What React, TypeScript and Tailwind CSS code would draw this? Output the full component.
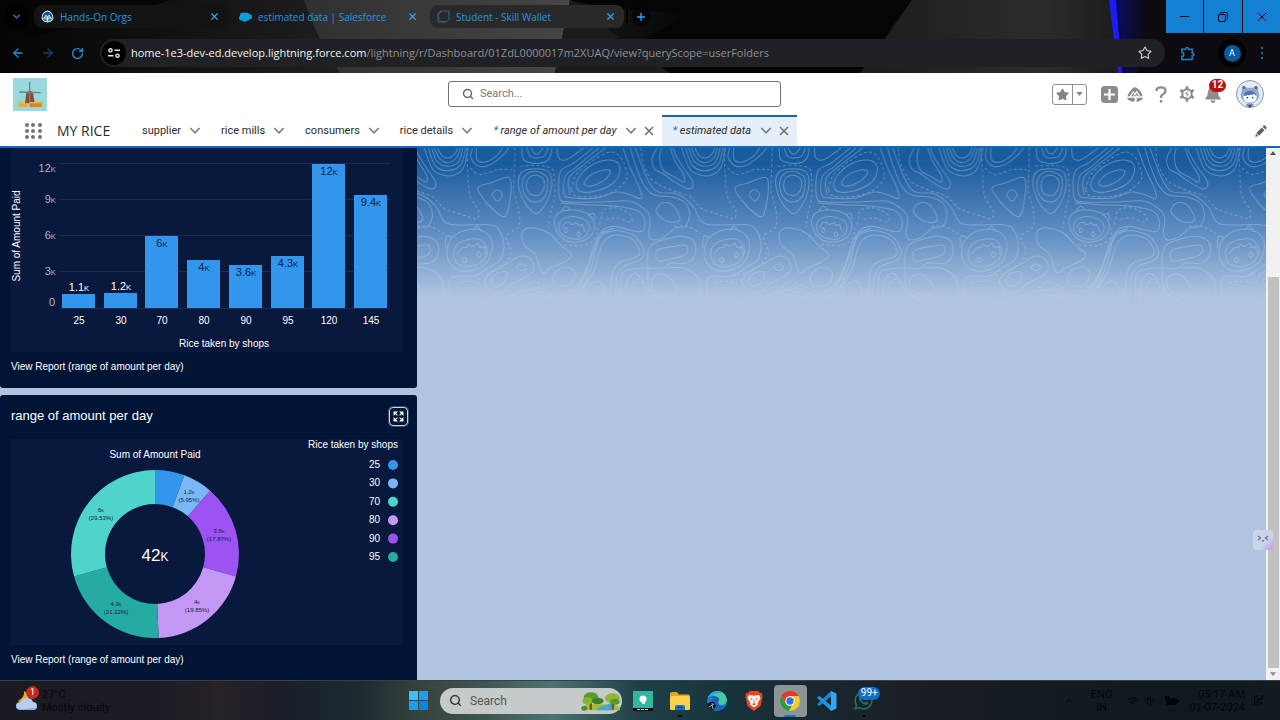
import React from "react";
import { ArrowLeft, ArrowRight, RotateCw, X, Plus, ChevronDown, ChevronUp, Star, Search, Wifi, Volume1 } from "lucide-react";
import { FaWhatsapp, FaStar } from "react-icons/fa";

const UI = "font-[Roboto,'Open_Sans',sans-serif]";
const ARIAL = "font-['Liberation_Sans',Arial,sans-serif]";

/* ---------- Browser ---------- */

function TrailheadIcon() {
  return (
    <svg viewBox="0 0 26 26" className="size-[13px] shrink-0">
      <path d="M13 1Q24 3 25 16q-2 8-12 9Q3 24 1 16 2 3 13 1z" fill="#dff0fa" />
      <path d="M3 16Q3 5 13 3 Q23 5 23 16 Z" fill="#12508f" />
      <path d="M5 16l5-7 3 4 3-4 5 7z" fill="#d9e7f5" />
      <path d="M8 15l2-3 2 3zM14 15l2-3 2 3z" fill="#12508f" />
      <path d="M3 17h20q-3 6-10 6T3 17z" fill="#2f8f6a" />
      <path d="M11 17h4l-2 7z" fill="#fff" />
    </svg>
  );
}

function CloudIcon() {
  return (
    <svg viewBox="0 0 26 20" className="h-[10px] w-[13px] shrink-0" fill="#0d9dda">
      <circle cx="8" cy="7" r="6" />
      <circle cx="15" cy="6.500" r="5.500" />
      <circle cx="20.500" cy="9.500" r="5.500" />
      <circle cx="5" cy="12" r="5" />
      <circle cx="11" cy="14" r="5.500" />
      <circle cx="16" cy="12.500" r="5" />
    </svg>
  );
}

function WalletIcon() {
  return (
    <svg viewBox="0 0 26 26" className="size-[13px] shrink-0" fill="none" strokeWidth="2">
      <path d="M7 2h17v17l-5 5H2V8z" stroke="#2d6b94" />
      <path d="M7 2v3H4v14l4 4h10" stroke="#5d4f8f" strokeDasharray="5 2" />
    </svg>
  );
}

function BrowserTab({ icon, title, tone }: { icon: React.ReactNode; title: string; tone: string }) {
  return (
    <div className={`mr-1 flex h-[23px] w-[194px] items-center gap-[6px] rounded-lg pr-2 pl-[7px] ${tone}`}>
      {icon}
      <span className="flex-1 truncate font-['Open_Sans',sans-serif] text-[10px] leading-4 text-[#2795e0]">{title}</span>
      <button aria-label={`Close ${title}`} className="text-[#2ea3f2]">
        <X className="size-[11px]" strokeWidth={2.6} />
      </button>
    </div>
  );
}

function BrowserChrome() {
  return (
    <header className={`relative h-[73px] shrink-0 overflow-hidden bg-[#050506] ${UI}`}>
      <svg viewBox="0 0 1280 73" preserveAspectRatio="none" className="absolute inset-0 size-full" aria-hidden="true">
        <defs>
          <linearGradient id="gray" x1="0" x2="1">
            <stop offset="0" stopColor="#303030" />
            <stop offset="1" stopColor="#464646" />
          </linearGradient>
          <linearGradient id="slate" x1="0" x2="1">
            <stop offset="0" stopColor="#1c1c1c" />
            <stop offset=".7" stopColor="#2c2c2c" />
            <stop offset="1" stopColor="#1b1b1b" />
          </linearGradient>
          <linearGradient id="glow" x1="0" x2="1">
            <stop offset="0" stopColor="#0b0c9c" />
            <stop offset="1" stopColor="#0d0b0f" />
          </linearGradient>
          <linearGradient id="fade" x1="0" x2="1">
            <stop offset="0" stopColor="#040404" />
            <stop offset="1" stopColor="#1f1f20" />
          </linearGradient>
          <linearGradient id="dusk" x1="0" x2="1">
            <stop offset="0" stopColor="#1d1d1e" />
            <stop offset="1" stopColor="#050506" />
          </linearGradient>
        </defs>
        <path d="M0 40Q90 30 170 0H340V73H0z" fill="url(#fade)" />
        <path d="M304 0H570L555 73H340Q318 42 304 0z" fill="url(#gray)" />
        <path d="M570 0Q590 8 690 14L640 40 670 73H555z" fill="url(#dusk)" />
        <path d="M566 28H606L650 60 670 73H555z" fill="#1c1c1d" />
        <path d="M912 0H1112L1122 73H860z" fill="url(#slate)" />
        <path d="M1118 0H1280V73H1124z" fill="#0d0b0f" />
        <path d="M1114 0h34l-10 73h-16z" fill="url(#glow)" opacity=".6" />
        <path d="M1109 0h7l6 73h-4z" fill="#1c1cf5" />
      </svg>

      <div className="relative flex h-[33px] items-center">
        <button aria-label="Search tabs" className="mr-[6px] ml-[5px] flex size-[23px] items-center justify-center rounded-lg bg-black text-[#2795e0]">
          <ChevronDown className="size-[11px]" strokeWidth={2.6} />
        </button>
        <BrowserTab icon={<TrailheadIcon />} title="Hands-On Orgs" tone="bg-[#131314]" />
        <BrowserTab icon={<CloudIcon />} title="estimated data | Salesforce" tone="bg-transparent" />
        <BrowserTab icon={<WalletIcon />} title="Student - Skill Wallet" tone="bg-[#29292a]" />
        <span className="-ml-[2px] h-[13px] w-[2px] bg-black" />
        <button aria-label="New tab" className="ml-[3px] flex size-5 items-center justify-center rounded-full bg-black/50 text-[#2ea3f2]">
          <Plus className="size-3" strokeWidth={2.8} />
        </button>
        <div className="ml-auto flex h-[33px] gap-px text-black">
          <button aria-label="Minimize" className="flex w-[37px] items-center justify-center bg-[#1380d4]">
            <span className="h-px w-[9px] bg-black" />
          </button>
          <button aria-label="Restore" className="flex w-[38px] items-center justify-center bg-[#1380d4]">
            <svg viewBox="0 0 10 10" className="size-[10px]" fill="none" stroke="currentColor">
              <rect x=".5" y="2.500" width="7" height="7" rx="1.500" />
              <path d="M2.500 2.500V1.500q0-1 1-1H8q1.500 0 1.500 1.500V6.500q0 1-1 1" />
            </svg>
          </button>
          <button aria-label="Close window" className="flex w-[37px] items-center justify-center bg-[#1380d4]">
            <svg viewBox="0 0 10 10" className="size-[10px]" stroke="currentColor">
              <path d="M1 1l8 8M9 1L1 9" />
            </svg>
          </button>
        </div>
      </div>

      <div className="relative mt-[6px] flex h-7 items-center">
        <div className="flex w-[100px] items-center gap-[16px] pl-[11px] text-[#2392df]">
          <button aria-label="Back"><ArrowLeft className="size-[14px]" strokeWidth={2.2} /></button>
          <button aria-label="Forward" className="text-[#12486e]"><ArrowRight className="size-[14px]" strokeWidth={2.2} /></button>
          <button aria-label="Reload"><RotateCw className="size-[13px]" strokeWidth={2.4} /></button>
        </div>
        <div className="flex h-7 flex-1 items-center rounded-full bg-[#202124] pr-[13px] pl-[2px]">
          <span className="flex size-6 shrink-0 items-center justify-center rounded-full bg-black">
            <svg viewBox="0 0 12 10" className="h-[10px] w-3" fill="none" stroke="#e8eaed" strokeWidth="1.400">
              <circle cx="2.500" cy="2.300" r="1.600" />
              <path d="M6.500 2.300H12M0 7.700h5.500" />
              <circle cx="9.500" cy="7.700" r="1.600" />
            </svg>
          </span>
          <p className="min-w-0 flex-1 truncate pl-[5px] font-['Open_Sans',sans-serif] text-[11px] leading-4 text-[#8d9095]">
            <span className="text-[#f1f3f4]">home-1e3-dev-ed.develop.lightning.force.com</span>/lightning/r/Dashboard/01ZdL0000017m2XUAQ/view?queryScope=userFolders
          </p>
          <button aria-label="Bookmark this tab" className="text-[#c7cacd]"><Star className="size-[14px]" strokeWidth={2} /></button>
        </div>
        <div className="flex w-[115px] items-center pr-[17px] pl-[15px]">
          <button aria-label="Extensions">
            <svg viewBox="0 0 16 16" className="size-[15px]" fill="none" stroke="#1f83c8" strokeWidth="1.600">
              <path d="M2 3.500h4q0-2 1.500-2t1.500 2h4v4q2 0 2 1.500t-2 1.500v4H2v-3.500q2 0 2-2t-2-2z" />
            </svg>
          </button>
          <button aria-label="Profile" className="mr-[15px] ml-auto flex size-7 items-center justify-center rounded-full bg-black">
            <span className="flex size-[17px] items-center justify-center rounded-full bg-[#065a9e] text-[9px] leading-3 text-white">A</span>
          </button>
          <button aria-label="Menu" className="flex flex-col gap-[3px]">
            <i className="size-[2px] rounded-full bg-[#2392df]" />
            <i className="size-[2px] rounded-full bg-[#2392df]" />
            <i className="size-[2px] rounded-full bg-[#2392df]" />
          </button>
        </div>
      </div>
    </header>
  );
}

/* ---------- Application header ---------- */

function MillLogo() {
  return (
    <svg viewBox="0 0 102 99" className="h-[33px] w-[34px]" role="img" aria-label="MY RICE logo">
      <rect width="102" height="99" fill="#9bd8dd" />
      <rect x="12" y="68" width="78" height="18" fill="#b9cf7c" />
      <path d="M40 44h20l5 32H36z" fill="#874b35" />
      <path d="M48 45h3v30h-3z" fill="#b97955" />
      <path d="M41 44q9-12 18 0z" fill="#5d4a48" />
      <path d="M48 12h4v58h-4z" fill="#8c7f70" />
      <path d="M18 40l65 2v4l-65-2z" fill="#64828a" />
      <rect x="17" y="76" width="25" height="11" fill="#f2a93c" />
      <rect x="50" y="72" width="36" height="15" fill="#d4862c" />
      <path d="M50 72h36v4H50z" fill="#f0b050" />
    </svg>
  );
}

function AstroAvatar() {
  return (
    <svg viewBox="0 0 84 84" className="size-7" role="img" aria-label="User avatar">
      <circle cx="42" cy="42" r="40.500" fill="#e3eaf5" stroke="#8d97a5" strokeWidth="3" />
      <path d="M18 32q-2-14 4-15 6 0 10 6h20q4-6 10-6 6 1 4 15 5 8 3 18-4 18-27 18T15 50q-2-10 3-18z" fill="#90a8ce" />
      <circle cx="24" cy="23" r="4" fill="#4a6898" />
      <circle cx="60" cy="23" r="4" fill="#4a6898" />
      <path d="M22 50q0-18 20-18t20 18q0 17-20 17T22 50z" fill="#fff" />
      <path d="M22 47q3-15 20-15t20 15q-6-2-8-6-4 5-10 3-6 4-9 0-3 5-13 3z" fill="#5574a6" />
      <circle cx="34" cy="53" r="2.500" fill="#33507f" />
      <circle cx="50" cy="53" r="2.500" fill="#33507f" />
      <path d="M30 72q12-4 24 0l-4 8q-8 4-16 0z" fill="#7c93b8" />
      <circle cx="42" cy="78" r="4" fill="#2d4470" />
    </svg>
  );
}

function HeaderActions() {
  return (
    <div className="flex items-center justify-end pr-4">
      <div className="mr-[9px] flex h-[21px] w-[35px] rounded-[3px] border border-[#8f8f8f] text-[#858585]">
        <button aria-label="Add favorite" className="flex flex-1 items-center justify-center border-r border-[#8f8f8f]">
          <FaStar className="size-[13px]" />
        </button>
        <button aria-label="Favorites list" className="flex w-[13px] items-center justify-center">
          <svg viewBox="0 0 8 5" className="h-1 w-[7px]" fill="currentColor"><path d="M0 0h8L4 5z" /></svg>
        </button>
      </div>
      <button aria-label="Global actions" className="flex w-[26px] justify-center">
        <svg viewBox="0 0 17 17" className="size-[17px]">
          <rect width="17" height="17" rx="3.500" fill="#8c8c8c" />
          <path d="M8.500 3v11M3 8.500h11" stroke="#fff" strokeWidth="2.200" />
        </svg>
      </button>
      <button aria-label="Guidance center" className="flex w-[26px] justify-center">
        <svg viewBox="0 0 48 45" className="h-[15px] w-4" fill="#8c8c8c">
          <path d="M1 28Q5 14 18 3q6-4 12 0 14 10 17 25z" />
          <path d="M10 28l9-13 5 7 5-8 9 14" fill="none" stroke="#fff" strokeWidth="3.500" />
          <path d="M19 28l4-6M29 28l-2-4" stroke="#fff" strokeWidth="2.500" />
          <path d="M0 32h18q8 0 6 5l-3 7Q3 43 0 32zM27 44q4-4 2-8-1-4 5-4h14q-4 11-21 12z" />
        </svg>
      </button>
      <button aria-label="Help" className="flex w-[26px] justify-center">
        <svg viewBox="0 0 12 17" className="h-[17px] w-3" fill="none" stroke="#8c8c8c" strokeWidth="2.400">
          <path d="M1.500 5Q1.500 1.400 6 1.400T10.500 5Q10.500 7 8 8.300 6 9.300 6 11.500V12" />
          <path d="M6 14v2.600" />
        </svg>
      </button>
      <button aria-label="Setup" className="flex w-[26px] justify-center">
        <svg viewBox="0 0 48 48" className="size-4" fill="none" stroke="#8c8c8c">
          <circle cx="24" cy="24" r="14" strokeWidth="6" />
          <path d="M24 1v8M24 39v8M4 12.500l7 4M37 31.500l7 4M4 35.500l7-4M37 16.500l7-4" strokeWidth="8" />
          <path d="M26 16l-6 8h8l-5 8" strokeWidth="3" />
        </svg>
      </button>
      <button aria-label="12 notifications" className="relative flex w-[26px] justify-center">
        <svg viewBox="0 0 16 17" className="h-[17px] w-4" fill="#8c8c8c">
          <path d="M8 1q4.500 0 5 5 .2 4 2.500 6v1.500H.5V12Q2.800 10 3 6q.5-5 5-5zM5.500 14.500h5Q10 17 8 17t-2.500-2.500z" />
        </svg>
        <span className="absolute -top-[7px] left-[9px] flex h-[13px] w-[17px] items-center justify-center rounded-full bg-[#c20a0a] text-[10px] leading-3 font-bold text-white">12</span>
      </button>
      <button aria-label="View profile" className="ml-[10px]"><AstroAvatar /></button>
    </div>
  );
}

function Chevron() {
  return (
    <svg viewBox="0 0 12 7" className="h-[7px] w-3 shrink-0" fill="none" stroke="#7d7b78" strokeWidth="1.600">
      <path d="M1.300 1L6 5.800 10.700 1" />
    </svg>
  );
}

function NavItem({ label }: { label: string }) {
  return (
    <li className="flex items-center gap-2 px-[10px]">
      <a href="#" className="whitespace-nowrap">{label}</a>
      <button aria-label={`${label} list`}><Chevron /></button>
    </li>
  );
}

function WorkTab({ label, active }: { label: string; active?: boolean }) {
  return (
    <li className={`flex items-center border-t-2 pr-2 pb-[2px] pl-[10px] ${active ? "border-[#1b65a6] bg-[#e4effa]" : "border-transparent"}`}>
      <a href="#" className="mr-[9px] whitespace-nowrap italic">
        <span className="text-[#0176d3]">*</span> {label}
      </a>
      <button aria-label={`${label} actions`} className="mr-[7px]"><Chevron /></button>
      <button aria-label={`Close ${label}`} className="text-[#706e6b]">
        <svg viewBox="0 0 10 10" className="size-[10px]" stroke="currentColor" strokeWidth="1.500"><path d="M1 1l8 8M9 1L1 9" /></svg>
      </button>
    </li>
  );
}

function AppHeader() {
  return (
    <div className={`shrink-0 border-b-2 border-[#0b6cbd] bg-white ${UI}`}>
      <div className="grid h-[42px] grid-cols-[35fr_26fr_39fr] items-center">
        <div className="pl-[13px]"><MillLogo /></div>
        <label className="flex h-[26px] items-center gap-[6px] rounded-[3px] border border-[#747474] pl-[13px]">
          <Search className="size-3 text-[#666]" strokeWidth={2.8} />
          <input type="text" aria-label="Search" placeholder="Search..." className="min-w-0 flex-1 bg-transparent text-[11px] leading-4 outline-none placeholder:text-[#777]" />
        </label>
        <HeaderActions />
      </div>
      <nav className="flex h-[31px] items-stretch text-[11px] leading-4 text-[#2b2b2b]">
        <button aria-label="App launcher" className="ml-[25px] grid w-[17px] grid-cols-3 content-center gap-[2px]">
          {Array.from({ length: 9 }, (_, i) => <i key={i} className="size-[4px] rounded-full bg-[#747474]" />)}
        </button>
        <h1 className="flex w-[90px] items-center pl-[15px] font-['Open_Sans',sans-serif] text-[14px] leading-5 whitespace-nowrap">MY RICE</h1>
        <ul className="flex items-stretch">
          <NavItem label="supplier" />
          <NavItem label="rice mills" />
          <NavItem label="consumers" />
          <NavItem label="rice details" />
          <WorkTab label="range of amount per day" />
          <WorkTab label="estimated data" active />
        </ul>
        <button aria-label="Edit navigation" className="mr-[13px] ml-auto">
          <svg viewBox="0 0 12 12" className="size-3" fill="#5f5f5f">
            <path d="M1.300 8l5.500-5.500 2.700 2.700L4 10.700zM7.600 1.700L8.700.6q.6-.5 1.200 0l1.500 1.500q.5.600 0 1.200L10.300 4.400zM.9 8.800l2.300 2.300L.3 11.900z" />
          </svg>
        </button>
      </nav>
    </div>
  );
}

/* ---------- Dashboard ---------- */

function Value({ n }: { n: string }) {
  return <>{n}<tspan fontSize="70%">K</tspan></>;
}

const bars = [
  { shop: "25", label: "1.1", top: 146, outside: true },
  { shop: "30", label: "1.2", top: 145, outside: true },
  { shop: "70", label: "6", top: 88 },
  { shop: "80", label: "4", top: 112 },
  { shop: "90", label: "3.6", top: 117 },
  { shop: "95", label: "4.3", top: 108 },
  { shop: "120", label: "12", top: 16 },
  { shop: "145", label: "9.4", top: 47 },
];

const ticks = [
  { n: "12", line: 15, text: 24 },
  { n: "9", line: 51, text: 55 },
  { n: "6", line: 87, text: 91 },
  { n: "3", line: 123, text: 127 },
];

function BarChart() {
  return (
    <svg viewBox="0 0 392 204" className="block h-[204px] w-full bg-[#09193d]" fontSize="10" role="img" aria-label="Sum of Amount Paid by Rice taken by shops">
      {ticks.map((t) => (
        <g key={t.n}>
          <path d={`M49 ${t.line}.5H379`} stroke="#1c2c4f" />
          <text x="45" y={t.text} fontSize="11" textAnchor="end" fill="#a9b4c8"><Value n={t.n} /></text>
        </g>
      ))}
      <text x="44" y="158" fontSize="11" textAnchor="end" fill="#a9b4c8">0</text>
      <path d="M49 160.500H379" stroke="#1c2c4f" />
      {bars.map((b, i) => {
        const x = 51 + Math.round(i * 41.7);
        return (
          <g key={b.shop} textAnchor="middle">
            <rect x={x} y={b.top} width="33" height={160 - b.top} fill="#3296ed" />
            <text x={x + 17} y={b.outside ? b.top - 3 : b.top + 11} fontSize="11" fill={b.outside ? "#fff" : "#0a2147"}><Value n={b.label} /></text>
            <text x={x + 17} y="176" fill="#fff">{b.shop}</text>
          </g>
        );
      })}
      <text x="213" y="199" textAnchor="middle" fill="#fff">Rice taken by shops</text>
      <text transform="translate(9 88) rotate(-90)" textAnchor="middle" fill="#fff">Sum of Amount Paid</text>
    </svg>
  );
}

const slices = [
  { from: 0, to: 20.5, color: "#3296ed" },
  { from: 20.5, to: 41.1, color: "#77b8f5", n: "1.2", pct: "(5.95%)", x: 178, y: 55 },
  { from: 41.1, to: 105.5, color: "#9d53f2", n: "3.6", pct: "(17.87%)", x: 208, y: 94 },
  { from: 105.5, to: 177.5, color: "#c398f5", n: "4", pct: "(19.85%)", x: 186, y: 165 },
  { from: 177.5, to: 254.5, color: "#26aba4", n: "4.3", pct: "(21.22%)", x: 105, y: 167 },
  { from: 254.5, to: 360, color: "#4ed4cd", n: "6", pct: "(29.53%)", x: 90, y: 73 },
];

const legend = [
  ["25", "#3296ed"],
  ["30", "#77b8f5"],
  ["70", "#4ed4cd"],
  ["80", "#c398f5"],
  ["90", "#9d53f2"],
  ["95", "#26aba4"],
];

function arc(from: number, to: number) {
  const p = (deg: number, r: number) => {
    const a = (deg * Math.PI) / 180;
    return `${(144 + r * Math.sin(a)).toFixed(2)} ${(115 - r * Math.cos(a)).toFixed(2)}`;
  };
  return `M${p(from, 84)}A84 84 0 0 1 ${p(to, 84)}L${p(to, 50)}A50 50 0 0 0 ${p(from, 50)}Z`;
}

function DonutChart() {
  return (
    <svg viewBox="0 0 392 206" className="block h-[206px] w-full bg-[#09193d]" fontSize="10" fill="#fff" role="img" aria-label="Sum of Amount Paid share by shop">
      <text x="144" y="19" textAnchor="middle">Sum of Amount Paid</text>
      {slices.map((s) => <path key={s.from} d={arc(s.from, s.to)} fill={s.color} />)}
      {slices.filter((s) => s.n).map((s) => (
        <g key={s.pct} fontSize="6" fill="#14213d" textAnchor="middle">
          <text x={s.x} y={s.y}><Value n={s.n ?? ""} /></text>
          <text x={s.x} y={s.y + 8}>{s.pct}</text>
        </g>
      ))}
      <text x="144" y="122" textAnchor="middle" fontSize="17"><Value n="42" /></text>
      <text x="387" y="9" textAnchor="end">Rice taken by shops</text>
      {legend.map(([shop, color], i) => (
        <g key={shop}>
          <text x="369" y={Math.round(29 + i * 18.4)} textAnchor="end">{shop}</text>
          <circle cx="382" cy={26 + i * 18.4} r="5" fill={color} />
        </g>
      ))}
    </svg>
  );
}

function ReportLink() {
  return (
    <div className="flex h-[30px] items-center">
      <a href="#" className="text-[10px] leading-4 text-white">View Report (range of amount per day)</a>
    </div>
  );
}

/* Topographic contours as "x,y" points of one 772-unit tile. */
const openContours = [
  "62,0 74,22 92,30 112,20 122,0",
  "52,0 68,32 92,44 118,30 130,0",
  "44,0 60,40 92,55 124,42 138,0",
  "34,0 54,52 92,68 132,50 146,0",
  "22,0 46,62 80,82 115,80 140,58 154,0",
  "720,0 706,30 712,62 740,78 770,100 810,122 826,118 826,98 800,60 776,20 768,0",
  "734,0 728,30 740,68 775,88 800,102 800,80 775,40 760,0",
  "166,0 162,30 185,55 220,50 260,20 275,0",
  "178,0 180,35 205,42 240,22 256,0",
  "342,0 350,14 362,18 378,0",
  "330,0 340,25 362,30 382,24 394,0",
  "314,0 320,35 350,46 385,42 400,25 405,0",
  "420,0 425,30 445,36 480,15 500,0",
  "528,0 470,45 430,72 428,150 460,162 540,162 590,160 640,160 690,190 700,215 695,255 705,275 740,268 775,240 805,235 818,200 805,165 770,148 710,140 680,110 655,50 640,0",
  "545,0 480,55 444,85 442,140 470,150 540,150 600,132 640,140 672,152 668,120 640,60 618,0",
  "565,0 500,50 456,90 458,140",
  "430,165 500,170 560,172 620,178 665,190 684,220 675,250 640,246 590,235 555,250 530,310 500,380 470,425 420,440 370,420 320,430 260,450 180,465 105,465 98,430 104,388 170,385 220,355 250,335 260,290 245,245 215,230 95,228 60,180 30,150 0,135",
  "655,0 690,90 720,130 772,135",
  "86,300 88,265 104,268",
  "168,248 180,234 194,252",
  "434,190 446,174 460,186",
  "514,202 530,196 534,214",
  "480,450 530,370 555,290 590,262 640,270 665,300 662,325 610,342 588,370 580,430 560,470",
  "490,440 525,350 548,270 590,248 650,262 680,305 670,335 620,355 600,385 595,440 575,480",
  "470,440 505,380 540,270 590,240",
  "610,470 615,380 650,362 692,360 740,360 760,345 810,345 835,320 830,280 790,265 740,275 705,290 692,320 692,370 695,410 720,450 780,465 840,455 852,420 840,385 800,360 750,360",
  "625,475 630,400 660,378 700,430 760,470",
  "190,468 260,460 320,428 370,430 420,450 470,440 500,410",
  "220,475 280,465 330,440 380,445 430,462 490,440",
];

const closedContours = [
  "182,120 220,105 270,88 282,105 278,160 265,205 240,195 205,160",
  "226,140 240,125 256,138 242,160",
  "328,112 335,90 355,82 378,92 382,115 370,138 352,142 335,135",
  "316,112 325,82 355,70 388,85 392,115 382,148 355,162 328,148",
  "304,105 315,72 355,62 395,72 404,108 392,155 365,194 345,190 318,155",
  "502,105 520,82 550,68 578,68 574,85 548,105 515,115",
  "478,110 495,75 530,48 575,36 605,48 606,80 585,108 540,128 495,132",
  "718,190 735,165 765,170 788,205 782,222 745,218",
  "412,225 425,195 470,186 515,200 533,235 515,270 470,283 430,265",
  "426,232 440,212 475,206 512,222 515,250 490,272 455,270 432,255",
  "90,310 105,270 150,245 200,250 226,285 215,335 180,362 130,368 98,345",
  "110,320 120,290 150,275 190,275 210,305 200,335 165,355 125,350",
  "314,270 322,245 350,240 395,255 430,290 464,320 440,342 400,360 382,375 370,365 355,320 325,295",
  "715,325 725,305 770,295 805,292 812,310 795,325 750,335 725,340",
  "705,410 712,385 745,380 770,405 782,430 760,440 725,435",
  "505,440 520,410 545,400 562,425 555,455 530,465",
  "408,390 425,365 455,358 474,375 465,405 435,415 412,408",
  "202,400 225,372 265,350 310,325 342,335 350,365 330,385 290,405 260,430 225,430",
  "222,400 235,378 268,372 264,400 240,415",
  "298,358 312,348 328,358 315,368",
  "136,336 142,328 149,336 142,344",
  "180,320 186,312 192,320 186,328",
  "442,246 447,239 452,246 447,254",
  "480,258 485,251 490,258 485,266",
];

const dashedContours = [
  "150,0 152,60 158,140 185,190 178,212 150,205 110,192 80,180 45,145 0,130",
  "672,0 680,50 710,100 772,130",
  "294,0 292,70 290,130 304,180 305,235 268,265 282,310 265,345 215,375 165,385",
  "160,60 190,80 240,65 285,65",
  "310,55 360,52 405,62 412,100 412,150 400,200 395,240",
  "462,125 478,80 525,40 580,12 612,30 630,75 625,100 590,130 540,145 480,145 462,125",
  "548,230 555,200 560,185 600,180 640,200 640,222 600,210 560,215",
  "0,235 40,235 80,258",
  "440,290 500,292 535,270 540,240",
  "640,470 645,415 665,395 690,430 720,470",
  "120,440 125,405 180,402 200,430 260,445 320,420 350,400 400,420 450,430 490,400 520,385",
];

/* Smooth curve through the listed points (Catmull-Rom to Bézier). */
function curve(list: string, closed = false) {
  const pts = list.split(" ").map((p) => p.split(",").map(Number));
  const n = pts.length;
  const at = (i: number) => (closed ? pts[(i + n) % n] : pts[Math.max(0, Math.min(n - 1, i))]);
  let d = `M${pts[0].join(" ")}`;
  for (let i = 0; i < (closed ? n : n - 1); i++) {
    const [a, b, c, e] = [at(i - 1), at(i), at(i + 1), at(i + 2)];
    d += `C${b[0] + (c[0] - a[0]) / 6} ${b[1] + (c[1] - a[1]) / 6} ${c[0] - (e[0] - b[0]) / 6} ${c[1] - (e[1] - b[1]) / 6} ${c[0]} ${c[1]}`;
  }
  return d;
}

const openPath = openContours.map((c) => curve(c)).join("");
const closedPath = closedContours.map((c) => curve(c, true)).join("");
const dashedPath = dashedContours.map((c) => curve(c)).join("");

function Topography() {
  return (
    <svg className="absolute inset-0 size-full" aria-hidden="true">
      <defs>
        <linearGradient id="fadeOut" x1="0" x2="0" y1="0" y2="1">
          <stop offset="0" stopColor="#fff" stopOpacity=".36" />
          <stop offset=".8" stopColor="#fff" stopOpacity=".36" />
          <stop offset="1" stopColor="#fff" stopOpacity="0" />
        </linearGradient>
        <mask id="topoMask"><rect width="100%" height="166" fill="url(#fadeOut)" /></mask>
        <g id="topoTile" fill="none" stroke="#c3dbf2" strokeWidth="3">
          <path d={openPath} />
          <path d={closedPath} />
          <path d={dashedPath} strokeDasharray="9 7" />
          <path d="M120 318l14-18 14-2 6-10 12 8 16-10 6 12 14-2 4 24M436 240l6-14 14-4 8 8 16-6 4 8 12-2 8 22" />
        </g>
        <pattern id="topo" width="772" height="600" patternUnits="userSpaceOnUse" patternTransform="translate(417 0) scale(.3333)">
          <use href="#topoTile" />
          <use href="#topoTile" x="-772" />
        </pattern>
      </defs>
      <rect width="100%" height="166" fill="url(#topo)" mask="url(#topoMask)" />
    </svg>
  );
}

function ScrollBar() {
  return (
    <div className="flex w-[14px] shrink-0 flex-col items-center bg-[#f1f1f1]" aria-hidden="true">
      <svg viewBox="0 0 8 5" className="my-[3px] h-[4px] w-[6px]" fill="#505050"><path d="M0 5h8L4 0z" /></svg>
      <div className="h-[119px] shrink-0" />
      <div className="w-[11px] flex-1 bg-[#c1c1c1]" />
      <svg viewBox="0 0 8 5" className="my-[4px] h-[4px] w-[6px]" fill="#8a8a8a"><path d="M0 0h8L4 5z" /></svg>
    </div>
  );
}

function Dashboard() {
  return (
    <main className={`relative flex min-h-0 flex-1 overflow-hidden bg-[#b0c4df] ${ARIAL}`}>
      <div className="relative flex-1">
        <div className="absolute inset-x-0 top-0 h-[164px] bg-linear-to-b from-[#195c9e] from-10% via-[#6692c4] via-55% to-[#b0c4df] to-90%" />
        <Topography />
        <div className="relative flex h-full w-[417px] flex-col gap-[7px] bg-[#b0c4df]">
          <section className="rounded-b-[3px] bg-[#001536] pr-[14px] pb-[6px] pl-[11px]">
            <BarChart />
            <ReportLink />
          </section>
          <section className="flex-1 rounded-t-[3px] bg-[#001536] pr-[14px] pl-[11px]">
            <div className="-mr-[5px] flex h-11 items-center justify-between pb-[2px]">
              <h2 className="text-[13px] leading-5 text-white">range of amount per day</h2>
              <button aria-label="Expand" className="flex size-[19px] items-center justify-center rounded-[4px] border border-[#c9d2e0] ring-1 ring-[#3d4f6e]">
                <svg viewBox="0 0 30 30" className="size-[11px]" fill="#fff" stroke="#fff" strokeWidth="3">
                  <path d="M3 3h7L3 10zM27 3v7l-7-7zM3 27v-7l7 7zM27 27h-7l7-7z" />
                  <path d="M5 5l7 7M25 5l-7 7M5 25l7-7M25 25l-7-7" />
                </svg>
              </button>
            </div>
            <DonutChart />
            <ReportLink />
          </section>
        </div>
      </div>
      <ScrollBar />
      <button aria-label="Assistant" className="absolute right-[7px] bottom-[130px] flex size-5 items-center justify-center rounded-[3px] bg-linear-to-br from-[#c8d5ea] from-60% to-[#c79ae0]">
        <svg viewBox="0 0 12 7" className="mb-1 h-[7px] w-3" fill="none" stroke="#66758c" strokeWidth="1.300">
          <path d="M1 1l2.500 2L1 5M11 1L8.500 3 11 5M5 5.500q1 1 2 0" />
        </svg>
      </button>
    </main>
  );
}

/* ---------- Taskbar ---------- */

function WeatherIcon() {
  return (
    <svg viewBox="0 0 22 20" className="h-5 w-[22px]">
      <path d="M8 0q1 6-6 10 3 3 8 1 4-3 2-8z" fill="#f4a829" />
      <path d="M5 19q-5 0-5-4t5-4q1-4 6-4t6 4q4 0 4 4t-4 4z" fill="#b5cdf4" />
      <path d="M2 17q3 2 8 1t10-1q-1 2-4 2H5q-2 0-3-2z" fill="#86a9e3" />
    </svg>
  );
}

function TreesArt() {
  return (
    <svg viewBox="0 0 120 60" className="h-5 w-10 shrink-0">
      <path d="M2 58q2-18 24-18h60q30 0 32 18z" fill="#9fbf34" />
      <path d="M48 58q0-10 20-14t22-12l12 8q-10 8-4 18z" fill="#4aa5d4" />
      <path d="M26 34h7v22h-7zM92 36h7v20h-7z" fill="#8a4b2b" />
      <ellipse cx="30" cy="18" rx="22" ry="14" fill="#5d9a2b" />
      <ellipse cx="20" cy="30" rx="16" ry="11" fill="#86b52d" />
      <ellipse cx="50" cy="30" rx="18" ry="10" fill="#3f7f2b" />
      <ellipse cx="94" cy="22" rx="22" ry="15" fill="#8fb92f" />
      <ellipse cx="102" cy="32" rx="14" ry="9" fill="#5f962b" />
      <ellipse cx="10" cy="52" rx="9" ry="7" fill="#4b8a2c" />
    </svg>
  );
}

function EdgeIcon() {
  return (
    <svg viewBox="0 0 20 20" className="size-5">
      <circle cx="10" cy="10" r="10" fill="#1584d6" />
      <path d="M1 7Q4 0 11 0q8 1 9 9-1 5-6 5-4-1-2-4 0-5-6-5-3 0-5 2z" fill="#49c9a0" />
      <path d="M1 7Q4 0 11 0q3 0 5 2Q9 1 6 5 3 5 1 7z" fill="#2fa8e0" />
      <path d="M1 7q6-4 11 0 0 3-1 4-1 3 4 4 2 0 3-1-3 6-9 6-5 0-6-5 0-6 4-8-4-1-6 0z" fill="#1b62b8" />
      <path d="M0 13q3-3 7-2l2 4-3 4q-4-1-6-6z" fill="#15161a" />
      <path d="M2 16l5-3M5 12l1 6" stroke="#a8a8a8" />
    </svg>
  );
}

function ChromeIcon() {
  return (
    <svg viewBox="0 0 20 20" className="size-5">
      <circle cx="10" cy="10" r="10" fill="#f9c930" />
      <path d="M1.340 5L5.700 12.500 8 14.500l4-.5-3 6A10 10 0 0 1 1.340 5z" fill="#2b9b47" />
      <path d="M1.340 5A10 10 0 0 1 18.660 5H10L5.700 12.500z" fill="#e2382d" />
      <circle cx="10" cy="10" r="4.800" fill="#fff" />
      <circle cx="10" cy="10" r="3.700" fill="#2f73e0" />
    </svg>
  );
}

function CodeIcon() {
  return (
    <svg viewBox="0 0 20 20" className="size-5">
      <path d="M14 0v5.500L3 14.500 2 15 .3 13.500V13z" fill="#1787d0" />
      <path d="M14 20v-5.500L3 5.500 2 5 .3 6.500V7z" fill="#2196e0" />
      <path d="M14 0l5.500 2.500v15L14 20z" fill="#36a5ee" />
    </svg>
  );
}

function FolderIcon() {
  return (
    <svg viewBox="0 0 20 18" className="h-[18px] w-5">
      <path d="M0 2q0-2 2-2h5l2 2.500h9q2 0 2 2V8H0z" fill="#e5a520" />
      <rect y="4" width="20" height="14" rx="1.500" fill="#fbd04e" />
      <path d="M5 18v-3q0-2 2-2h6q2 0 2 2v3z" fill="#1b74c9" />
      <path d="M7 15.500h6" stroke="#0b4f93" strokeWidth="1.500" />
    </svg>
  );
}

function TaskIcon({ label, children, active, dot }: { label: string; children: React.ReactNode; active?: boolean; dot?: boolean }) {
  return (
    <button aria-label={label} className={`relative flex h-8 flex-1 items-center justify-center rounded-[4px] ${active ? "bg-[#8b9599]" : ""}`}>
      {children}
      {active && <i className="absolute bottom-0 h-[2px] w-3 rounded-full bg-[#1674cf]" />}
      {dot && <i className="absolute bottom-0 h-[2px] w-1 rounded-full bg-[#06090c]" />}
    </button>
  );
}

function Taskbar() {
  return (
    <footer className={`grid h-10 shrink-0 grid-cols-[1fr_auto_1fr] items-center border-t border-[#3a3f45] bg-[linear-gradient(90deg,#191a22_0%,#1b1c25_12%,#262226_17%,#1a1e28_22%,#1b2a30_28%,#37443d_33%,#3f5650_38%,#4d7272_43%,#1f3f46_50%,#17343b_57%,#19272f_64%,#1b1f28_70%,#141a22_82%,#10191f_93%,#131a22_100%)] ${UI}`}>
      <div className="flex items-center gap-1 pl-4">
        <div className="relative">
          <WeatherIcon />
          <span className="absolute -top-[5px] left-[10px] flex size-[13px] items-center justify-center rounded-full bg-[#c42b1c] text-[9px] leading-3 text-white">1</span>
        </div>
        <p className="text-[11px] leading-[13px] text-[#07080b]">27°C<br />Mostly cloudy</p>
      </div>
      <div className="flex items-center">
        <button aria-label="Start" className="flex w-9 justify-center">
          <svg viewBox="0 0 19 19" className="size-[19px]" fill="#209fe8">
            <path d="M0 0h9v9H0z" fill="#46bdf5" />
            <path d="M10 0h9v9h-9zM0 10h9v9H0z" />
            <path d="M10 10h9v9h-9z" fill="#0f84dd" />
          </svg>
        </button>
        <label className="mr-[5px] ml-1 flex h-[26px] w-[182px] items-center gap-2 rounded-full bg-[#c5cbca] pr-[1px] pl-[9px]">
          <Search className="size-[13px] shrink-0 text-[#262626]" strokeWidth={2.4} />
          <input type="text" aria-label="Taskbar search" placeholder="Search" className="min-w-0 flex-1 bg-transparent text-[12px] leading-4 outline-none placeholder:text-[#555]" />
          <TreesArt />
        </label>
        <div className="flex w-[253px] gap-1">
          <TaskIcon label="Recorder">
            <svg viewBox="0 0 20 20" className="size-5">
              <path d="M0 0h20v17H0z" fill="#35b59d" />
              <path d="M0 17h20v3H0z" fill="#0b0f12" />
              <circle cx="10" cy="8" r="3.500" fill="#fff" />
              <path d="M9 9h3v4H9z" fill="#e4f5f1" />
              <path d="M4 18.500h11" stroke="#ccc" strokeDasharray="3 1" />
            </svg>
          </TaskIcon>
          <TaskIcon label="File Explorer" dot><FolderIcon /></TaskIcon>
          <TaskIcon label="Edge"><EdgeIcon /></TaskIcon>
          <TaskIcon label="Brave">
            <svg viewBox="0 0 18 20" className="h-5 w-[18px]">
              <path d="M5 0h8l2 2 2 0 .5 4-2 9L9 20l-6.500-5-2-9L1 2h2z" fill="#f0441f" />
              <path d="M4 4l5 .8L14 4l1.500 3-3 5 .5 1.500L9 16.500 5 13.500 5.500 12l-3-5z" fill="#fff" />
              <path d="M5 7l3 1-1.500 1zM13 7l-3 1 1.500 1zM9 8l.7 3L9 12l-.7-1zM7 13l2-1 2 1-2 1.500z" fill="#f0441f" />
            </svg>
          </TaskIcon>
          <TaskIcon label="Chrome" active><ChromeIcon /></TaskIcon>
          <TaskIcon label="Visual Studio Code"><CodeIcon /></TaskIcon>
          <TaskIcon label="WhatsApp" dot>
            <FaWhatsapp className="size-[21px] text-[#1f7a4a]" />
            <span className="absolute top-[2px] left-[11px] flex h-[13px] w-[22px] items-center justify-center rounded-full bg-[#1070c9] text-[10px] leading-3 text-white">99+</span>
          </TaskIcon>
        </div>
      </div>
      <div className="flex items-center justify-end pr-4 text-[11px] leading-[13px] text-[#04070a]">
        <ChevronUp className="mr-[16px] size-3" />
        <p className="mr-[15px] text-center">ENG<br />IN</p>
        <Wifi className="mr-[6px] size-3" />
        <Volume1 className="mr-[8px] size-3" />
        <svg viewBox="0 0 14 10" className="mr-[10px] h-[10px] w-[14px]" fill="currentColor"><path d="M2 2h9q1 0 1 1v1h2v3h-2v1q0 1-1 1H2Q1 9 1 8V3q0-1 1-1zM0 0h4v4H0z" /></svg>
        <p className="mr-[7px] text-right">05:17 AM<br />01-07-2024</p>
        <svg viewBox="0 0 12 12" className="size-3" fill="none" stroke="currentColor" strokeWidth="1.200">
          <path d="M7 1H4Q2.500 1 2.500 2.500V9h7V6M1 9h9M5 11h2M5 4h2L5 7h2M9 1h2L9 4h2" />
        </svg>
      </div>
    </footer>
  );
}

export default function App() {
  return (
    <div className="flex h-screen min-w-[1024px] flex-col overflow-hidden">
      <BrowserChrome />
      <AppHeader />
      <Dashboard />
      <Taskbar />
    </div>
  );
}
